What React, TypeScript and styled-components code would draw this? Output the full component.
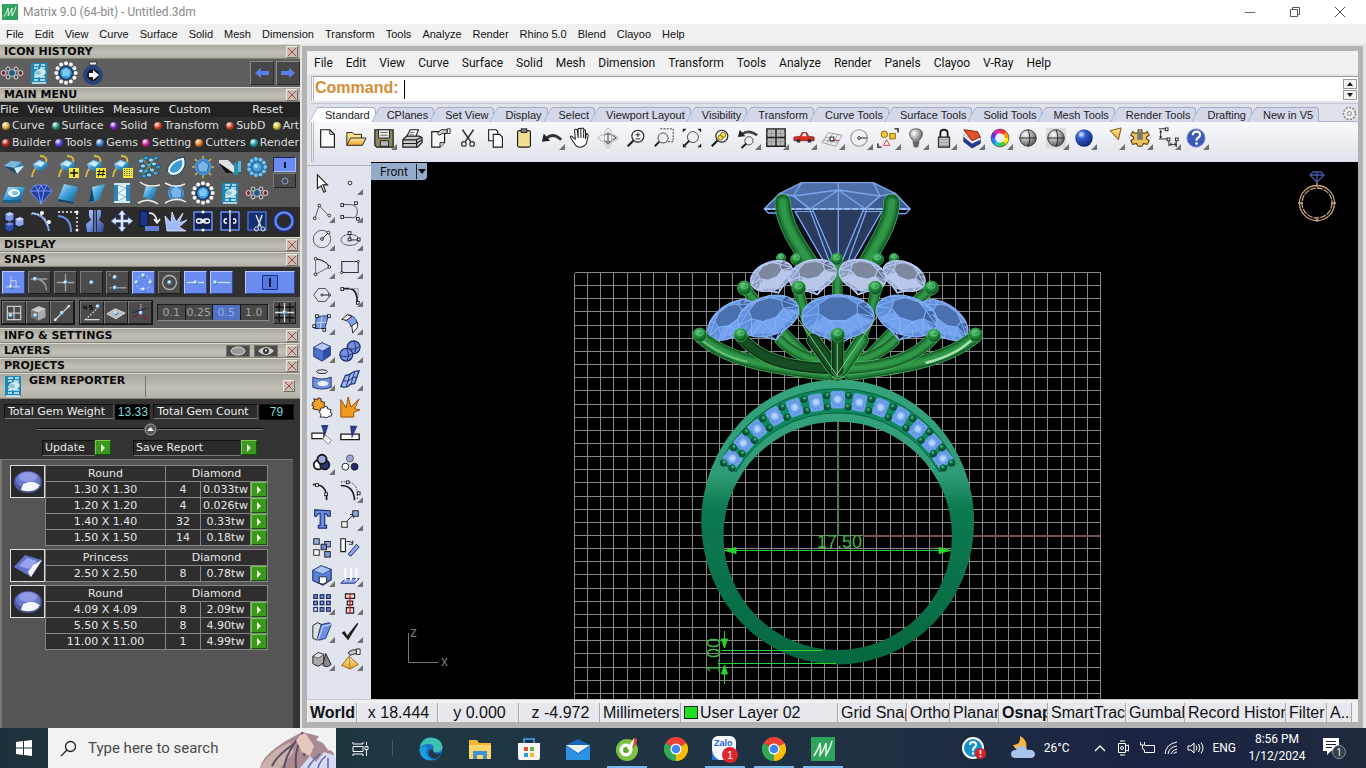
import React from 'react';
import styled, { createGlobalStyle } from 'styled-components';

const VERDANA = `"DejaVu Sans", Verdana, sans-serif`;
const ARIAL = `"Liberation Sans", Arial, sans-serif`;
const SEGOE = `Roboto, "Noto Sans", sans-serif`;

const Global = createGlobalStyle`
  *, *::before, *::after { box-sizing: border-box; }
  html, body { margin: 0; background: #1c2f3a; }
  button { font: inherit; color: inherit; background: none; border: 0; padding: 0; margin: 0; }
  svg { display: block; flex: none; }
`;

/* ---------- shell ---------- */
const Page = styled.div`
  display: flex;
  flex-direction: column;
  min-height: 100vh;
  overflow: hidden;
  font-family: ${ARIAL};
`;
const TitleBar = styled.header`
  display: flex;
  align-items: center;
  gap: 5px;
  height: 24px;
  padding: 0 14px 0 2px;
  background: #fff;
  color: #8a8a8a;
  font: 12px ${SEGOE};
`;
const WindowButtons = styled.div`
  display: flex;
  gap: 33px;
  margin-left: auto;
  padding-right: 6px;
`;
const MenuBar = styled.nav<{ $size: number; $gap: number; $font: string; $height: number; $left: number }>`
  display: flex;
  align-items: center;
  gap: ${(p) => p.$gap}px;
  height: ${(p) => p.$height}px;
  padding-left: ${(p) => p.$left}px;
  background: #f1f1f1;
  color: #111;
  font: ${(p) => p.$size}px ${(p) => p.$font};
  white-space: nowrap;
`;
const Main = styled.main`
  display: flex;
  flex: 1;
  min-height: 0;
  background: #e4e4e4;
`;

/* ---------- sidebar ---------- */
const Sidebar = styled.aside`
  display: flex;
  flex-direction: column;
  flex: none;
  width: 300px;
  background: #333;
  color: #e8e8e8;
  font: 11px ${VERDANA};
`;
const PanelHeader = styled.div<{ $tall?: boolean }>`
  display: flex;
  align-items: ${(p) => (p.$tall ? 'stretch' : 'center')};
  gap: 4px;
  height: ${(p) => (p.$tall ? 26 : 15)}px;
  padding: ${(p) => (p.$tall ? '0 5px 0 1px' : '0 2px 0 4px')};
  border-top: 1px solid #dcd9d0;
  border-bottom: 1px solid #86837b;
  background: linear-gradient(#aaa79e, #c2bfb6 60%, #b3b0a6);
  color: #0a0a0a;
`;
const PanelTitle = styled.h2`
  margin: 0;
  font: bold 11px/13px ${VERDANA};
`;
const HeaderEnd = styled.div`
  display: flex;
  align-items: center;
  gap: 4px;
  margin-left: auto;
`;
const HeaderDivider = styled.i`
  width: 1px;
  margin: 2px 0 1px 16px;
  background: #77746c;
`;
const CloseBox = styled.button`
  display: grid;
  place-items: center;
  width: 12px;
  height: 12px;
  border: 1px solid;
  border-color: #e9e6de #6d6a64 #6d6a64 #e9e6de;
  background: #c8c0b6;
`;
const EyeBox = styled.button`
  display: grid;
  place-items: center;
  width: 24px;
  height: 12px;
  border: 1px solid #77746c;
  background: #4a4a4a;
`;
const HistoryRow = styled.div`
  display: flex;
  align-items: center;
  gap: 3px;
  height: 28px;
  background: #5f5f5f;
`;
const HistoryArrows = styled.div`
  display: flex;
  gap: 2px;
  margin-left: auto;
`;
const ArrowButton = styled.button`
  display: grid;
  place-items: center;
  width: 24px;
  height: 24px;
  border: 1px solid;
  border-color: #8a8a8a #2a2a2a #2a2a2a #8a8a8a;
  background: #474747;
`;
const SideMenu = styled.nav`
  display: flex;
  gap: 9px;
  height: 15px;
  background: #222;
  color: #e4e4e4;
  line-height: 14px;
  & > :last-child { margin: 0 17px 0 auto; }
`;
const Categories = styled.nav`
  display: flex;
  flex-direction: column;
  height: 35px;
  background: #2d2d2d;
`;
const CategoryRow = styled.div`
  display: flex;
  justify-content: space-between;
  height: 17px;
  padding: 0 1px 0 2px;
  overflow: hidden;
  white-space: nowrap;
`;
const Category = styled.button<{ $dot: string }>`
  display: flex;
  align-items: center;
  gap: 2px;
  color: #dedede;
  &::before {
    content: '';
    width: 8px;
    height: 8px;
    border-radius: 50%;
    background: radial-gradient(circle at 35% 30%, #fff, ${(p) => p.$dot} 45%, #111 110%);
  }
`;
const ToolArea = styled.div`
  display: flex;
  height: 55px;
  background: linear-gradient(90deg, #636363, #575757);
`;
const ToolGrid = styled.div`
  display: grid;
  grid-template-columns: repeat(10, 27px);
  grid-auto-rows: 26px;
  padding-top: 2px;
`;
const IconButton = styled.button`
  display: grid;
  place-items: center;
`;
const TogglePair = styled.div`
  display: flex;
  flex-direction: column;
  gap: 1px;
  padding: 5px 0 0 3px;
`;
const Toggle = styled.button<{ $on?: boolean }>`
  display: grid;
  place-items: center;
  width: 23px;
  height: 15px;
  border: 1px solid;
  border-color: ${(p) => (p.$on ? '#16225a #a9c0ff #a9c0ff #16225a' : '#7d7d7d #222 #222 #7d7d7d')};
  background: ${(p) => (p.$on ? '#6a8cf0' : '#4c4c4c')};
`;
const EditRow = styled.div`
  display: grid;
  grid-template-columns: repeat(11, 27px);
  height: 30px;
  padding-bottom: 3px;
  background: #2b2b2b;
`;
const SnapRow = styled.div`
  display: flex;
  align-items: center;
  gap: 3px;
  height: 30px;
  padding: 0 5px 0 2px;
  background: #303030;
`;
const SnapButton = styled.button<{ $on?: boolean }>`
  display: grid;
  place-items: center;
  width: 23px;
  height: 23px;
  border: 1px solid;
  border-color: ${(p) => (p.$on ? '#b6c8ff #2e4690 #2e4690 #b6c8ff' : '#7a7a7a #1d1d1d #1d1d1d #7a7a7a')};
  background: ${(p) => (p.$on ? '#6a8cf0' : '#4b4b4b')};
`;
const MasterSnap = styled(SnapButton)`
  width: 50px;
  margin-left: auto;
`;
const GridRow = styled.div`
  display: flex;
  align-items: center;
  gap: 4px;
  height: 31px;
  padding: 0 4px 0 1px;
  background: #5c5c5c;
`;
const ButtonTrio = styled.div`
  display: flex;
  border: 1px solid #161616;
  & > button { width: 24px; }
`;
const GridSteps = styled.div`
  display: flex;
  flex: 1;
  border: 1px solid;
  border-color: #1c1c1c #8b8b8b #8b8b8b #1c1c1c;
`;
const Step = styled.button<{ $on?: boolean }>`
  flex: 1;
  height: 15px;
  border-right: 1px solid #1a1a1a;
  background: ${(p) => (p.$on ? '#5170c0' : '#484848')};
  color: ${(p) => (p.$on ? '#8faaf0' : '#a5a5a5')};
  line-height: 14px;
`;

/* ---------- gem reporter ---------- */
const Reporter = styled.section`
  display: flex;
  flex: 1;
  flex-direction: column;
  background: #333;
`;
const Totals = styled.dl`
  display: flex;
  gap: 1px;
  margin: 0;
  padding: 5px 4px 0 4px;
`;
const TotalLabel = styled.dt`
  flex: auto;
  height: 15px;
  padding-left: 3px;
  border: 1px solid;
  border-color: #111 #555 #777 #111;
  background: #2b2b2b;
  color: #f0f0f0;
  line-height: 13px;
  white-space: nowrap;
`;
const TotalValue = styled.dd`
  flex: none;
  width: 35px;
  margin: 0 2px 0 0;
  border: 1px solid #111;
  background: #000;
  color: #7fd8de;
  font: 12px/14px ${ARIAL};
  text-align: center;
`;
const Collapse = styled.div`
  display: flex;
  align-items: center;
  height: 18px;
  padding: 0 37px;
  &::before, &::after { content: ''; flex: 1; height: 2px; background: #0c0c0c; border-bottom: 1px solid #777; }
`;
const ReportActions = styled.div`
  display: flex;
  gap: 22px;
  height: 21px;
  padding: 2px 43px 0 42px;
`;
const Action = styled.div<{ $grow?: boolean }>`
  display: flex;
  flex: ${(p) => (p.$grow ? 1 : 'none')};
  width: 69px;
  height: 16px;
`;
const ActionText = styled.span`
  flex: 1;
  padding-left: 2px;
  border: 1px solid;
  border-color: #111 #333 #777 #111;
  background: #2a2a2a;
  line-height: 13px;
  white-space: nowrap;
`;
const Go = styled.button`
  display: grid;
  place-items: center;
  width: 16px;
  height: 15px;
  border: 1px solid;
  border-color: #7cc854 #17520c #17520c #7cc854;
  background: #3c981c;
`;
const GemList = styled.div`
  display: flex;
  flex: 1;
  flex-direction: column;
  gap: 3px;
  margin-right: 7px;
  padding: 5px 0 0 8px;
  border: solid #777;
  border-width: 1px 0 0 2px;
  background: #555;
`;
const GemGroup = styled.div`
  display: flex;
  align-items: flex-start;
`;
const Thumb = styled.div`
  display: grid;
  place-items: center;
  width: 35px;
  height: 33px;
  border: 1px solid #ddd;
  background: #2a2a2a;
`;
const GemTable = styled.table`
  width: 222px;
  border-collapse: collapse;
  table-layout: fixed;
  background: #2e2e2e;
  th, td {
    height: 16px;
    padding: 0;
    border: 1px solid #858585;
    font-weight: normal;
    line-height: 13px;
    text-align: center;
  }
`;

/* ---------- modelling window ---------- */
const Frame = styled.section`
  display: flex;
  flex: 1;
  flex-direction: column;
  min-width: 0;
  margin: 2px 3px 0 2px;
  border: solid #b3b3b3;
  border-width: 5px 5px 6px;
  background: #e1e4ea;
`;
const CommandRow = styled.div`
  display: flex;
  align-items: center;
  height: 25px;
  margin: 2px 0 2px 4px;
  border-left: 3px double #b5bac6;
  border-top: 1px solid #9a9a9a;
  background: #fff;
`;
const CommandLabel = styled.label`
  padding: 0 5px 2px 1px;
  color: #d58c35;
  font: bold 16px/20px ${ARIAL};
`;
const CommandInput = styled.input`
  flex: 1;
  height: 19px;
  padding: 0;
  border: 0;
  border-left: 1px solid #000;
  outline: 0;
  font: 16px ${ARIAL};
`;
const Spinner = styled.div`
  display: flex;
  flex-direction: column;
  gap: 1px;
  padding-right: 1px;
`;
const SpinButton = styled.button`
  display: grid;
  place-items: center;
  width: 14px;
  height: 10px;
  border: 1px solid #999;
  background: #f3f3f3;
`;
const TabStrip = styled.div`
  display: flex;
  align-items: flex-end;
  height: 19px;
  margin-left: 4px;
  padding-left: 7px;
  border-top: 1px solid #c3c8d2;
  background: #dfe2ea;
  box-shadow: inset 0 -1px #a9b4c9;
  font: 11px ${ARIAL};
  & > :last-child { margin: 0 1px 1px auto; }
`;
const Tab = styled.button<{ $on?: boolean }>`
  position: relative;
  height: 15px;
  margin-right: 4px;
  padding: 0 5px 0 7px;
  border-top: 1px solid #a3aec4;
  border-right: 1px solid #a3aec4;
  border-radius: 0 4px 0 0;
  background: ${(p) => (p.$on ? '#fff' : '#d3d8e9')};
  color: #222;
  line-height: 14px;
  white-space: nowrap;
  &::before {
    content: '';
    position: absolute;
    left: -5px;
    top: -1px;
    width: 9px;
    height: 15px;
    border-top: 1px solid #a3aec4;
    border-left: 1px solid #a3aec4;
    border-radius: 3px 0 0 0;
    background: inherit;
    transform: skewX(-28deg);
  }
`;
const TabText = styled.span`
  position: relative;
`;
const ToolBar = styled.div`
  display: flex;
  height: 40px;
  padding-top: 2px;
  margin-left: 4px;
  border-left: 3px double #b5bac6;
  background: linear-gradient(#f8f9fb, #dfe2ea);
`;
const ToolButton = styled.button<{ $menu?: boolean }>`
  position: relative;
  display: grid;
  place-items: center;
  width: 28px;
  height: 28px;
  &::after {
    content: '';
    display: ${(p) => (p.$menu ? 'block' : 'none')};
    position: absolute;
    right: 1px;
    bottom: 2px;
    width: 0;
    height: 0;
    border: 3px solid #707070;
    border-top-color: transparent;
    border-left-color: transparent;
  }
`;
const WorkArea = styled.div`
  display: flex;
  flex: 1;
  min-height: 0;
`;
const Palette = styled.div`
  display: grid;
  grid-template-columns: 28px 28px;
  grid-auto-rows: 28px;
  flex: none;
  align-content: start;
  width: 64px;
  padding: 7px 0 0 1px;
  box-shadow: inset 0 3px #e1e4ea, inset 0 4px #aeb4c0;
  background: #e0e4ec;
`;
const Viewport = styled.div`
  position: relative;
  display: flex;
  flex: 1;
  min-width: 0;
  background: #000;
  & > svg { width: 100%; height: 100%; }
`;
const ViewLabel = styled.button`
  position: absolute;
  left: 0;
  top: 1px;
  display: flex;
  align-items: center;
  height: 17px;
  padding-left: 9px;
  border-radius: 0 0 4px 0;
  background: #94abc9;
  color: #111;
  font: 12px ${SEGOE};
`;
const ViewArrow = styled.span`
  display: grid;
  place-items: center;
  width: 11px;
  height: 15px;
  margin-left: 8px;
  border-left: 1px solid #222;
`;
const StatusBar = styled.footer`
  display: flex;
  gap: 1px;
  height: 23px;
  padding: 3px 6px 0 1px;
  border-top: 1px solid #c8c8c8;
  background: #f0f0f0;
  color: #111;
  font: 16px/19px ${ARIAL};
  white-space: nowrap;
`;
const StatusCell = styled.span<{ $w: number; $bold?: boolean; $center?: boolean; $grow?: boolean }>`
  display: flex;
  align-items: center;
  justify-content: ${(p) => (p.$center ? 'center' : 'flex-start')};
  gap: 2px;
  flex: ${(p) => (p.$grow ? 1 : 'none')};
  width: ${(p) => p.$w}px;
  padding-left: 2px;
  overflow: hidden;
  border-right: 1px solid #a8a8a8;
  background: #e6e8ee;
  font-weight: ${(p) => (p.$bold ? 'bold' : 'normal')};
`;
const LayerSwatch = styled.i`
  width: 14px;
  height: 13px;
  border: 1px solid #222;
  background: #1fe01f;
`;

/* ---------- task bar ---------- */
const TaskBar = styled.footer`
  display: flex;
  align-items: stretch;
  height: 40px;
  background: linear-gradient(90deg, #1c323a, #1f3743 30%, #1f3043 65%, #1b2242 85%, #1f2a3e);
  color: #fff;
  font: 12px ${SEGOE};
`;
const StartButton = styled.button`
  display: grid;
  place-items: center;
  width: 48px;
`;
const SearchBox = styled.label`
  display: flex;
  align-items: center;
  gap: 11px;
  width: 288px;
  padding-left: 12px;
  background: #f2f2f2;
`;
const SearchInput = styled.input`
  flex: 1;
  min-width: 0;
  padding: 0;
  border: 0;
  outline: 0;
  background: transparent;
  font: 15px ${SEGOE};
  &::placeholder { color: #4a4a4a; opacity: 1; }
`;
const TaskButton = styled.button<{ $open?: boolean }>`
  display: grid;
  place-items: center;
  width: 49px;
  padding-top: 2px;
  background: linear-gradient(#76b9ed, #76b9ed) center bottom / 40px 2px no-repeat;
  background-size: ${(p) => (p.$open ? '40px 2px' : '0 0')};
`;
const TaskDivider = styled.i`
  width: 1px;
  margin: 12px 13px 12px 7px;
  background: #4b5a62;
`;
const Tray = styled.div`
  display: flex;
  align-items: center;
  margin-left: auto;
`;
const Weather = styled.button`
  display: flex;
  align-items: center;
  gap: 8px;
  margin: 0 24px 0 24px;
`;
const TrayIcons = styled.div`
  display: flex;
  align-items: center;
  gap: 8px;
`;
const Clock = styled.time`
  width: 82px;
  line-height: 17px;
  text-align: center;
`;
const Notice = styled.button`
  margin: 0 20px 0 4px;
`;

/* ---------- icons ---------- */
const N = { fill: 'none' };
const K = '#1b1b1b';
const B3 = '#1c2a66';

const DefsHolder = styled.svg`
  position: absolute;
`;
const Defs = () => (
  <DefsHolder width="0" height="0" aria-hidden="true">
    <defs>
      <radialGradient id="pearl" cx=".35" cy=".3" r=".8"><stop offset="0" stopColor="#fff" /><stop offset=".4" stopColor="#9fd6f5" /><stop offset="1" stopColor="#174a7c" /></radialGradient>
      <radialGradient id="grey" cx=".35" cy=".3" r=".8"><stop offset="0" stopColor="#fff" /><stop offset=".5" stopColor="#a5a5a5" /><stop offset="1" stopColor="#444" /></radialGradient>
      <radialGradient id="navy" cx=".35" cy=".3" r=".8"><stop offset="0" stopColor="#eaf2ff" /><stop offset=".3" stopColor="#2f5fd0" /><stop offset="1" stopColor="#0a1c66" /></radialGradient>
      <linearGradient id="aqua" x1="0" y1="0" x2="1" y2="1"><stop offset="0" stopColor="#c5ebff" /><stop offset=".5" stopColor="#3c9ed6" /><stop offset="1" stopColor="#155a86" /></linearGradient>
      <linearGradient id="peri" x1="0" y1="0" x2="1" y2="1"><stop offset="0" stopColor="#c6d4ff" /><stop offset=".5" stopColor="#6b8be0" /><stop offset="1" stopColor="#2e478f" /></linearGradient>
      <linearGradient id="gold" x1="0" y1="0" x2="0" y2="1"><stop offset="0" stopColor="#ffe9a0" /><stop offset="1" stopColor="#e8a22c" /></linearGradient>
      <linearGradient id="band" x1="0" y1="0" x2="0" y2="1"><stop offset="0" stopColor="#35a37c" /><stop offset=".33" stopColor="#2f9c75" /><stop offset=".45" stopColor="#0d7a52" /><stop offset="1" stopColor="#06683f" /></linearGradient>
      <radialGradient id="bead" cx=".4" cy=".3" r=".7"><stop offset="0" stopColor="#5cc474" /><stop offset=".5" stopColor="#1f8a3c" /><stop offset="1" stopColor="#0a4a1c" /></radialGradient>
      <radialGradient id="bead2" cx=".4" cy=".3" r=".7"><stop offset="0" stopColor="#5cc79c" /><stop offset=".4" stopColor="#0f6e4a" /><stop offset="1" stopColor="#053c26" /></radialGradient>
    </defs>
  </DefsHolder>
);

const sq = (x: number, y: number, s = 4, fill = '#fff') => <rect x={x} y={y} width={s} height={s} fill={fill} stroke={K} />;
const dot = (x: number, y: number, r = 1.5) => <circle cx={x} cy={y} r={r} fill="#fff" stroke={K} />;
const pearl = (x: number, y: number, r = 2.6) => <circle cx={x} cy={y} r={r} fill="url(#pearl)" />;
const halo = (n: number, r: number, s: number, fill: string) =>
  Array.from({ length: n }, (_, i) => (
    <circle key={i} cx={12 + r * Math.cos((i * 2 * Math.PI) / n)} cy={12 + r * Math.sin((i * 2 * Math.PI) / n)} r={s} fill={fill} />
  ));
const swirl = (
  <>
    <path d="M11 1q8 0 6 7-2 4-5 4M9 12q-5 2-6 10" stroke="#d9c23a" strokeWidth="1.800" {...N} />
    <path d="M4 9l6-4 8 2 1 4-6 5-7-2z" fill="url(#aqua)" />
    <path d="M6 9l5-3 5 2-4 4z" fill="#c9ecff" />
  </>
);
const magnifier = <><circle cx="14" cy="10" r="6.5" fill="#fff" fillOpacity=".5" stroke={K} strokeWidth="1.2" /><path d="M9 15l-6 6" stroke={K} strokeWidth="2.4" /></>;
const hands = 'M6 13l-3-3q-2-1-1 2l4 6q2 4 6 4t7-4l2-9q0-2-2-2l-1 6M18 13V4q-1-2-2 0v8V2q-1-2-3 0v10-10q-2-1-3 0l0 10-1-9q-2-1-3 0l1 11';

const icons: Record<string, React.ReactNode> = {
  trio: <><circle cx="3.500" cy="12" r="2.500" fill="#7a2d40" stroke="#e8dfe2" /><circle cx="8" cy="8" r="2" fill="#444" stroke="#ddd" /><circle cx="8" cy="16" r="2" fill="#444" stroke="#ddd" /><circle cx="12" cy="12" r="3.500" fill="#2b5876" stroke="#9ec3d8" /><circle cx="16" cy="8" r="2" fill="#444" stroke="#ddd" /><circle cx="16" cy="16" r="2" fill="#444" stroke="#ddd" /><circle cx="20.500" cy="12" r="2.500" fill="#7a2d40" stroke="#e8dfe2" /></>,
  report: <><path d="M4 2h16v20H4z" fill="#1d87b5" /><path d="M7 4h5M14 4h4M7 7h4M13 7h5M7 16h4M13 16h5M7 19h4M13 19h5M5 22h14" stroke="#d9f1fb" strokeWidth="1.300" /><ellipse cx="13" cy="12" rx="6" ry="4" fill="#cfe9f2" transform="rotate(-20 13 12)" /><ellipse cx="11" cy="12" rx="3" ry="2" fill="#8ec3d6" /></>,
  halo: <><circle cx="12" cy="12" r="6.500" fill="#3f9fe0" stroke="#123a66" strokeWidth="1.500" /><path d="M8 10l4-3 4 3-1 5h-6z" fill="#7cc8f5" />{halo(12, 9.7, 2, '#f2f4f6')}</>,
  cluster: <><circle cx="12" cy="12" r="10" fill="#2b6ea3" />{halo(11, 8.2, 1.9, '#7cc3e8')}<circle cx="12" cy="12" r="4.500" fill="#4aa3dd" /><circle cx="11" cy="11" r="2" fill="#a8dcf8" /></>,
  ringArrow: <><path d="M8 1h8l-1 3h-6z" fill="#eee" stroke="#223" strokeWidth=".8" /><circle cx="12" cy="14" r="8" stroke="#27447a" strokeWidth="4" fill="#181818" /><path d="M8 12h4V9l6 5-6 5v-3H8z" fill="#fff" /></>,
  gem1: <><path d="M2 11l7-5 10 1 3 4-7 8-4-2z" fill="#3d86b4" /><path d="M2 11l7-5 10 1-7 6z" fill="#7fb9d8" /><path d="M12 13l10-2-7 8z" fill="#d3ebf8" /><path d="M2 11l10 2 3 6-4-2z" fill="#1d4a66" /></>,
  gem2: swirl,
  gem3: <>{swirl}<rect x="13" y="13" width="10" height="10" fill="#f2e63d" /><path d="M18 14v8M14 18h8" stroke="#111" strokeWidth="1.600" /></>,
  gem4: <>{swirl}<rect x="13" y="13" width="10" height="10" fill="#f2e63d" /><path d="M16.500 14.500l-1 7M20.500 14.500l-1 7M14 16.500h8M14 19.500h8" stroke="#111" /></>,
  gem5: <>{swirl}<rect x="13" y="13" width="10" height="10" fill="#f2e63d" /><path d="M14 14.500h8M14 16.500h8M14 18.500h8M14 20.500h8" stroke="#444" strokeDasharray="1 1.500" /></>,
  pave: <>{[[4, 6], [9, 3], [14, 5], [19, 3], [6, 11], [12, 10], [17, 9], [21, 12], [4, 16], [9, 16], [15, 15], [19, 18], [12, 20], [7, 21]].map(([x, y], i) => <ellipse key={i} cx={x} cy={y} rx="2.600" ry="2" fill={i % 2 ? '#3f9bd0' : '#9ad4f2'} stroke="#145075" strokeWidth=".8" />)}<path d="M5 3l14 17M18 3L6 19" stroke="#aab458" strokeWidth=".8" /></>,
  drop: <><path d="M20 2q3 8-2 14-5 6-12 4-4-3-2-8Q8 4 20 2z" fill="#e8f4fb" stroke="#0f405e" /><path d="M18 5q1 7-3 10-4 4-8 2-2-2 0-5 4-6 11-7z" fill="#3e9ad0" /></>,
  prong: <><path d="M12 1v22M1 12h22M4 4l16 16M20 4L4 20" stroke="#d6b441" strokeWidth="1.600" /><circle cx="12" cy="12" r="8.500" fill="#4a8fcf" /><path d="M6 10l6-5 6 5-2 7H8z" fill="#79b6ea" stroke="#2d6aa8" /></>,
  cutter: <><path d="M1 5h9l6 6v7L1 8z" fill="#e0e4e6" /><path d="M1 8l14 10H8z" fill="#111" /><path d="M16 8h4v12h-4z" fill="#2a8cae" /><path d="M20 6h3v11h-3z" fill="#57bbd6" /></>,
  bezel: <><path d="M1 19L6 6h17l-4 13z" fill="url(#aqua)" /><path d="M1 19h18v3H1z" fill="#1a6188" /><ellipse cx="12" cy="12" rx="6" ry="4" fill="#e9f6ff" /><ellipse cx="13" cy="12" rx="3" ry="2" fill="#88bdd6" /></>,
  diamond: <><path d="M6 4h12l5 6-11 13L1 10z" fill="#2340a0" stroke="#6488f0" /><path d="M1 10h22M6 4l3 6 3-6 3 6 3-6M9 10l3 13 3-13" stroke="#7b9cf8" {...N} /></>,
  slab: <><path d="M8 3l14 3-5 15L2 18z" fill="url(#aqua)" /><path d="M2 18l15 3v2L2 20z" fill="#0f4666" /></>,
  wedge: <><path d="M9 6l13-3-6 16-8 3z" fill="url(#aqua)" /><path d="M9 6l-3 15 5-1z" fill="#0f4666" /></>,
  pillar: <><path d="M4 3h16v18H4z" fill="#2b85b6" /><path d="M8 3h8v18H8z" fill="#e9f3f7" /><path d="M8 4l8 3-8 5 8 4-8 4" stroke="#7fb6d1" {...N} /><path d="M4 3h16M4 21h16" stroke="#cfeaf7" strokeWidth="2" /></>,
  bridge: <><path d="M9 5l11 2-4 12-10-3z" fill="url(#aqua)" /><path d="M3 1q7 6 20 3M1 22q10-6 20 1" stroke="#eee" strokeWidth="1.500" {...N} /></>,
  orb: <><circle cx="12" cy="12" r="8" fill="#4f94d4" /><path d="M6 9l6-4 6 4-1 8H8z" fill="#7ab4ea" stroke="#2d6aa8" /><path d="M1 2q10 6 20 1M1 22q12-7 21-1" stroke="#eee" strokeWidth="1.500" {...N} /></>,
  cubes: <><path d="M3 5l5-2 4 2v6l-5 2-4-2z" fill="#7e96dc" stroke="#18204a" /><path d="M3 5l5-2 4 2-5 2z" fill="#bccaf6" /><path d="M13 10l5-2 4 2v6l-5 2-4-2z" fill="#8ea4e4" stroke="#18204a" /><path d="M13 10l5-2 4 2-5 2z" fill="#ccd7fa" /><path d="M3 15l5-2 4 2v6l-5 2-4-2z" fill="#2f4ca8" stroke="#18204a" /><path d="M3 15l5-2 4 2-5 2z" fill="#6f8ae0" /></>,
  arc: <><path d="M3 4q14 2 17 18" stroke="#7f9ff0" strokeWidth="2" {...N} /><path d="M2 5q14-2 17 12" stroke="#eee" strokeDasharray="2 1" {...N} /><circle cx="13" cy="4" r="2" fill="#fff" /><circle cx="20" cy="13" r="2" fill="#fff" /></>,
  fillet: <><path d="M2 3h19v18" stroke="#eee" strokeDasharray="2 2" strokeWidth="1.500" {...N} /><path d="M2 7q13 1 13 16" stroke="#6f91f0" strokeWidth="2" {...N} /><circle cx="21" cy="3" r="1.500" fill="#fff" /><circle cx="21" cy="21" r="1.500" fill="#fff" /></>,
  mirror: <><path d="M10 1H6v6l2 4-5 4 1 8h6zM14 1h4v6l-2 4 5 4-1 8h-6z" fill="url(#peri)" /><path d="M12 1v22" stroke="#8fb3ff" /></>,
  move: <path d="M12 1l4 5h-2.500v4.500H18V8l5 4-5 4v-2.500h-4.500V18H16l-4 5-4-5h2.500v-4.500H6V16l-5-4 5-4v2.500h4.500V6H8z" fill="#e1e9ff" stroke="#3c5bb0" strokeWidth=".7" />,
  rotate: <><path d="M3 2h8v15H3z" fill="#1b3583" stroke="#0a1437" /><path d="M8 17h14v5H8z" fill="#5e80d8" /><path d="M12 4q7 0 8 9M17 10l3 4 3-4" stroke="#fff" strokeWidth="1.500" {...N} /></>,
  burst: <path d="M3 22L1 7l6 7 1-11 4 10 7-9-4 10 8-3-8 7 7 4H3z" fill="#9fb9fb" stroke="#dfe8ff" strokeWidth=".8" />,
  link: <><path d="M3 3h18v18H3z" fill="#11204f" stroke="#6e8ff0" strokeWidth="1.500" /><rect x="5.500" y="10" width="6" height="4" rx="2" stroke="#fff" strokeWidth="1.300" {...N} /><rect x="12.500" y="10" width="6" height="4" rx="2" stroke="#fff" strokeWidth="1.300" {...N} /><path d="M9 12h6" stroke="#fff" strokeWidth="1.300" /><circle cx="12" cy="3" r="1.500" fill="#fff" /><circle cx="12" cy="21" r="1.500" fill="#fff" /></>,
  unlink: <><path d="M3 3h18v18H3z" fill="#11204f" stroke="#6e8ff0" strokeWidth="1.500" /><path d="M9 10H7q-2 2 0 4h2M15 10h2q2 2 0 4h-2M12 1v22" stroke="#fff" strokeWidth="1.300" {...N} /></>,
  trimPlan: <><path d="M3 3h18v18H3z" fill="#15306f" stroke="#4a6ad0" strokeWidth="1.500" /><path d="M11 6l5 12M17 6l-4 12" stroke="#ddd" strokeWidth="1.500" /><circle cx="11.500" cy="20" r="2" stroke="#ddd" {...N} /><circle cx="18" cy="20" r="2" stroke="#ddd" {...N} /></>,
  torus: <><circle cx="12" cy="12" r="8.500" stroke="#1b2f86" strokeWidth="5" {...N} /><circle cx="12" cy="12" r="8.500" stroke="#6785e2" strokeWidth="2.500" {...N} /></>,
  // snaps
  sEnd: <><path d="M3 17h16M9 17V5M9 10h6v7" stroke="#d5def8" {...N} />{pearl(9, 17)}</>,
  sNear: <><path d="M2 8h19M7 8q12 0 13 13" stroke="#999" strokeWidth="1.500" {...N} />{pearl(7, 8)}</>,
  sInt: <><path d="M12 2v20M2 12h20" stroke="#a5a5a5" strokeWidth="1.500" />{pearl(12, 12)}</>,
  sPoint: pearl(12, 12),
  sPerp: <><path d="M9 18h13M3 2v2M3 18h2" stroke="#999" strokeWidth="1.500" />{pearl(9, 6)}{pearl(9, 18)}</>,
  sQuad: <><circle cx="12" cy="12" r="8" stroke="#cfdcff" strokeDasharray="3 2" {...N} />{pearl(12, 4)}{pearl(20, 12)}{pearl(12, 20)}{pearl(4, 12)}</>,
  sCen: <><circle cx="12" cy="12" r="8" stroke="#b5b5b5" strokeWidth="1.500" {...N} />{pearl(12, 12)}</>,
  sMid: <><path d="M2 12h20" stroke="#d5def8" strokeWidth="1.500" />{pearl(12, 12)}</>,
  sLine: <><path d="M4 12h18" stroke="#d5def8" strokeWidth="1.500" />{pearl(5, 12)}</>,
  gWin: <><path d="M4 4h16v16H4zM12 4v16M4 12h16" stroke="#ccc" strokeWidth="1.500" {...N} />{pearl(8, 15)}</>,
  gCube: <><path d="M4 8l9-4 8 3v10l-8 4-9-4z" fill="#a9a9a9" /><path d="M4 8l8 3v10l-8-4z" fill="#787878" /><path d="M4 8l9-4 8 3-9 4z" fill="#ccc" />{pearl(9, 15)}</>,
  gLine: <><path d="M3 21L21 3" stroke="#ddd" strokeWidth="1.500" />{pearl(12, 12)}<circle cx="4" cy="20" r="1.500" fill="#fff" /><circle cx="20" cy="4" r="1.500" fill="#fff" /></>,
  g45: <><path d="M4 20L20 5" stroke="#eee" strokeDasharray="2 2" strokeWidth="1.300" /><path d="M3 20h18" stroke="#ddd" strokeWidth="1.500" /><path d="M5 3v5M2 3v3h4M12 3H9v2h3v3H9" stroke="#0a0a0a" strokeWidth="1.300" {...N} />{pearl(19, 4)}</>,
  gPlane: <><path d="M1 13l10-6 12 5-11 7z" fill="#bcbcbc" stroke="#e5e5e5" />{pearl(12, 12)}</>,
  gAxis: <><path d="M13 1v11" stroke="#ddd" strokeDasharray="2 1" /><path d="M2 12l19-6" stroke="#252a50" strokeWidth="1.500" /><path d="M13 12l8 9M3 17l10-5" stroke="#8a1f2c" strokeWidth="1.500" />{pearl(13, 12)}</>,
  gGrid: <><path d="M1 6h22M1 18h22M6 1v22M18 1v22" stroke="#111" strokeWidth="1.500" /><path d="M1 12h22M12 1v22" stroke="#ddd" strokeWidth="1.500" />{pearl(12, 12)}</>,
  // standard tool bar
  new: <><path d="M4 3h10l5 5v14H4z" fill="#fafafa" stroke={K} strokeWidth="1.300" /><path d="M14 3v5h5" stroke={K} {...N} /></>,
  open: <><path d="M2 20V6h6l2 2h8v4" fill="#fbe08a" stroke={K} /><path d="M2 20l4-8h17l-4 8z" fill="url(#gold)" stroke={K} /></>,
  save: <><path d="M2 3h20v19H4l-2-2z" fill="#8e8a66" stroke={K} strokeWidth="1.300" /><path d="M6 3h12v9H6z" fill="#e8e8e8" stroke={K} /><path d="M8 15h9v6H8z" fill="#bbb" stroke={K} /><path d="M8 6h8M8 9h8" stroke="#666" /></>,
  print: <><path d="M6 11l4-8h9l-3 8" fill="#fff" stroke={K} strokeWidth="1.200" /><path d="M10 6h5M9 8h5" stroke="#777" /><path d="M2 14l4-4h14l3 2v5l-5 5H2z" fill="#c9c9c9" stroke={K} strokeWidth="1.300" /><path d="M2 14h15v8M17 14l6-3M2 18h15l6-4" stroke={K} strokeWidth="1.300" {...N} /></>,
  props: <><path d="M3 5h14v12l-5 5H3z" fill="#f5f5f5" stroke={K} strokeWidth="1.300" /><path d="M12 22v-5h5" fill="#ddd" stroke={K} /><path d="M9 7l4-4h7v4h-5l-4 2z" fill="#ccc" stroke={K} /><path d="M20 2h3v5h-3z" fill="#fff" stroke={K} /></>,
  cut: <><path d="M6 3l9 13M18 3L9 16" stroke="#333" strokeWidth="1.700" /><circle cx="7.500" cy="18.500" r="2.500" stroke="#333" strokeWidth="1.300" {...N} /><circle cx="16.500" cy="18.500" r="2.500" stroke="#333" strokeWidth="1.300" {...N} /></>,
  copy: <><path d="M4 3h8l2 2v10H4z" fill="#fff" stroke={K} strokeWidth="1.200" /><path d="M9 8h7l3 3v11H9z" fill="#fff" stroke={K} strokeWidth="1.200" /></>,
  paste: <><rect x="5" y="4" width="14" height="18" rx="2" fill="#f0e092" stroke={K} strokeWidth="1.300" /><rect x="9" y="2" width="6" height="4" fill="#888" stroke={K} /></>,
  undo: <><path d="M5 13q8-8 17 1" stroke="#333" strokeWidth="3" {...N} /><path d="M1 16l2-9 7 8z" fill="#222" /></>,
  hand: <path d={hands} fill="#fff" stroke={K} strokeWidth="1.100" />,
  orbit: <><path d="M12 1q4 2 4 11t-4 11q-4-2-4-11t4-11zM1 12q2-4 11-4t11 4q-2 4-11 4T1 12z" stroke="#aaa" {...N} /><path d="M12 7v10M9 15l3 4 3-4M9 9l3-3 3 3M17 14l4-2-4-3" stroke="#333" {...N} /></>,
  zoomIn: <>{magnifier}<path d="M14 6v5M11.500 8.500h5M11.500 13h5" stroke={K} /></>,
  zoomWin: <><path d="M8 2h14v14H9" stroke={K} strokeDasharray="2 1.500" {...N} /><circle cx="11" cy="12" r="5.500" fill="#eee" stroke="#444" /><path d="M7 16l-5 5" stroke={K} strokeWidth="2" /></>,
  zoomExt: <><circle cx="13" cy="11" r="6" fill="#eee" stroke="#444" /><path d="M9 15l-5 5" stroke={K} strokeWidth="2" /><path d="M2 2h4L2 6zM22 2h-4l4 4zM2 22h4l-4-4zM22 22h-4l4-4z" fill={K} /></>,
  zoomSel: <>{magnifier}<circle cx="12.500" cy="11.500" r="2.700" fill="#f4e04a" stroke="#776a00" /><circle cx="15.500" cy="8.500" r="2.700" fill="#f4e04a" stroke="#776a00" /></>,
  undoView: <><path d="M5 8q8-6 17 1" stroke="#444" strokeWidth="3" {...N} /><path d="M1 11l2-8 6 7z" fill="#222" /><circle cx="13" cy="15" r="4.500" fill="#eee" stroke="#444" /><path d="M10 18l-5 5" stroke={K} strokeWidth="2" /></>,
  views: <><path d="M2 2h20v19H2z" fill="#b9b9b9" stroke={K} strokeWidth="1.500" /><path d="M2 7h20M2 16h20M7 2v19M17 2v19" stroke="#888" strokeWidth=".7" /><path d="M12 2v19M2 11.500h20" stroke={K} strokeWidth="1.500" /></>,
  car: <><path d="M1 15v-4l7-1 2-4h5l2 4 6 1v4z" fill="#dd2a22" stroke="#7a0d0a" strokeWidth=".7" /><path d="M10 10l1-3h3l1 3z" fill="#fff" /><circle cx="6" cy="15" r="2.300" fill="#333" /><circle cx="18" cy="15" r="2.300" fill="#333" /></>,
  mesh: <><path d="M1 17L8 6l15 3-7 12zM5 11l14 4M11 18l8-10M6 18l7-11M3 14l15 3" stroke="#9b9b9b" {...N} /><path d="M12 14l8 1" stroke="#c33" />{sq(10, 11, 4)}</>,
  circleCad: <><circle cx="11" cy="12" r="9" stroke="#999" strokeWidth="1.300" {...N} /><path d="M11 12h9" stroke={K} />{dot(11, 12)}</>,
  shapes: <><circle cx="8" cy="8" r="3.500" fill="#f5c932" stroke="#806000" /><path d="M14 7h6v6h-6z" fill="#f5c932" stroke="#806000" /><path d="M7 20l3.500-6 3.500 6z" fill="#fff" stroke="#c33" /><path d="M19 2h4v4M1 18v4h4" stroke={K} strokeWidth="1.500" {...N} /></>,
  bulb: <><path d="M12 2q7 0 7 6 0 3-4 7v3H9v-3Q5 11 5 8q0-6 7-6z" fill="url(#grey)" stroke="#555" /><path d="M9 18h6v3l-3 2-3-2z" fill="#666" /></>,
  lock: <><path d="M8 11V7q0-4 4-4t4 4v4" stroke={K} strokeWidth="2" {...N} /><path d="M6 11h12v11H6z" fill="#ccc" stroke={K} strokeWidth="1.300" /><path d="M6 14h12M6 17h12M6 20h12" stroke="#888" /></>,
  layers: <><path d="M3 11l9 7 9-5v5l-9 5-9-7z" fill="#23389c" stroke={K} strokeWidth=".7" /><path d="M3 8l9 7 9-5v4l-9 4-9-7z" fill="#fff" stroke="#888" strokeWidth=".7" /><path d="M3 3l15 2 3 6-9 4z" fill="#e5512a" stroke="#761c08" /></>,
  wheel: <>{['#f33', '#f90', '#fe0', '#5c2', '#2cb', '#28f', '#63d', '#e2a'].map((c, i) => <path key={c} d="M12 4.500A7.500 7.500 0 0 1 17.600 7" stroke={c} strokeWidth="4.500" transform={`rotate(${i * 45} 12 12)`} {...N} />)}<circle cx="12" cy="12" r="9.700" stroke="#333" strokeWidth=".7" {...N} /></>,
  ball: <><circle cx="12" cy="12" r="9" fill="url(#grey)" stroke="#333" /><path d="M3 12h18M12 3q4 9 0 18" stroke="#222" {...N} /></>,
  ballSel: <><path d="M1 1h22v22H1z" fill="#d0d0d0" opacity=".7" /><circle cx="12" cy="12" r="9" fill="url(#grey)" stroke="#333" /><path d="M3 12h18M12 3q4 9 0 18" stroke="#222" {...N} /></>,
  ballBlue: <circle cx="12" cy="12" r="9.500" fill="url(#navy)" />,
  cone: <path d="M10 4l12-3-3 13z" fill="url(#gold)" stroke="#7a4a00" />,
  gear: <><path d="M10 3h4v3l3 1 3-2 2 4-3 2v2l3 2-2 4-4-1-2 3h-4l-2-3-4 1-2-4 3-2v-2L2 9l2-4 3 2 3-1z" fill="#ecc15c" stroke="#5c3d08" strokeWidth="1.200" /><rect x="9" y="5" width="6" height="9" fill="#777" /></>,
  dims: <><path d="M2 2h9M4 4v8M2 13h11M13 13v8M21 14v8M14 19h7M3 6l1-2 1 2M3 10l1 2 1-2M16 17l-2 2 2 2M19 17l2 2-2 2" stroke={K} {...N} />{sq(9, 1, 3)}{sq(11, 12, 3)}{sq(20, 12, 3)}</>,
  help: <><circle cx="12" cy="12" r="10" fill="#3b57b8" stroke="#8fa5e6" /><path d="M8.500 9q0-4 4-4t4 3.500q0 2-2.500 3.500-1.500 1-1.500 3" stroke="#fff" strokeWidth="2.300" {...N} /><circle cx="12.500" cy="18" r="1.500" fill="#fff" /></>,
  // palette
  pointer: <path d="M7 3v15l4-3 3 7 2-1-3-7h5z" fill="#fff" stroke={K} strokeWidth="1.200" />,
  point: dot(12, 12, 2),
  poly: <><path d="M4 21L9 6l11 12" stroke="#555" {...N} />{dot(4, 20)}{dot(9, 6)}{dot(20, 17)}</>,
  curve: <><path d="M4 5h8q8 0 8 8t-8 6H4" stroke="#444" {...N} />{sq(2, 4, 3)}{sq(2, 17, 3)}{sq(17, 2, 3)}{sq(19, 19, 3)}</>,
  circle: <><circle cx="12" cy="12" r="9.500" stroke="#555" {...N} /><path d="M12 12l7-7" stroke={K} />{dot(12, 12)}{dot(19, 5)}</>,
  ellipse: <><ellipse cx="12" cy="13" rx="10" ry="6" stroke="#555" {...N} /><path d="M12 13h9M12 13V6" stroke={K} />{sq(10, 11, 3)}{sq(10, 4, 3)}{sq(20, 11, 3)}</>,
  arcPie: <><path d="M5 3q12 2 15 9L5 20z" stroke="#666" {...N} /><path d="M5 3q12 2 15 9" stroke={K} {...N} />{dot(5, 3)}{dot(20, 12)}{dot(5, 20)}</>,
  rect: <><path d="M3 6h18v12H3z" stroke="#333" strokeWidth="1.200" {...N} />{dot(21, 6, 1.2)}{dot(3, 18, 1.2)}</>,
  hexa: <><path d="M8 5h8l5 7-5 7H8l-5-7z" stroke="#444" {...N} /><path d="M12 12h8" stroke={K} />{dot(12, 12, 1.2)}{dot(20, 12, 1.2)}</>,
  blend: <><path d="M3 5h8q9 0 9 16" stroke={K} strokeWidth="1.800" {...N} /><path d="M11 5h10v10" stroke="#999" {...N} />{sq(2, 4, 3)}{sq(19, 19, 3)}</>,
  patch: <><path d="M6 5l13-1-4 14-11 0z" fill="#7393e0" stroke={B3} /><path d="M5 12l12-1M12 5l-2 13" stroke="#d2dcfa" />{sq(5, 3, 3)}{sq(18, 3, 3)}{sq(2, 14, 3)}{sq(13, 18, 3)}</>,
  sweep: <><path d="M9 3q8 0 11 9l-7 4q-1-6-8-8z" fill="#86a2ea" stroke={B3} /><path d="M9 3L3 8l5 1 6-4zM14 15l6-4v6l-5 6z" fill="#fff" stroke={K} /></>,
  box: <><path d="M3 8l9-5 9 4v10l-9 6-9-5z" fill="#4e71cf" stroke={B3} /><path d="M3 8l9-5 9 4-8 5z" fill="#b8c9f8" stroke={B3} strokeWidth=".6" /><path d="M13 12l8-5v10l-8 6z" fill="#2f4da5" /></>,
  spheres: <><circle cx="16" cy="8" r="7" fill="#7391e0" stroke={B3} strokeWidth="1.300" /><circle cx="8" cy="16" r="7" fill="#7391e0" stroke={B3} strokeWidth="1.300" /><path d="M10 9q6 3 12-2M2 17q6 3 12-2M16 1q4 7 1 13M8 9q4 7 1 13" stroke={B3} {...N} /></>,
  tubeIc: <><ellipse cx="12" cy="4" rx="6" ry="2" stroke={K} {...N} /><path d="M2 10q10 4 20 0v11q-10 4-20 0z" fill="#6f8ddd" stroke={B3} /><ellipse cx="13" cy="17" rx="6" ry="3" fill="#e8eefc" /></>,
  sheet: <><path d="M7 8q4 0 6-2 3-3 9-3l-5 14q-5 0-7 3-3 2-8 0z" fill="#9db3ee" stroke={B3} strokeWidth="1.300" /><path d="M5 14q5 1 7-1 3-4 7-3M12 7L8 20M17 4l-4 14" stroke={B3} {...N} /></>,
  puzzle: <><path d="M3 3l4 1 1-2 3 1v3l4 1-1 4 2 1-1 3-3-1-1 2-9-2 1-3-2-1 1-3 2-1z" fill="#f1a12b" stroke={K} /><path d="M11 13l3 0 1-2 3 1v2l4 1-1 3 2 1-1 3-3 0-1 2-4-1-4 0 1-3-2-2 1-2z" fill="#fff" stroke={K} /></>,
  explode: <path d="M2 23V4l6 9 2-12 3 11 9-9-5 11 6 1-7 3v5z" fill="#f39a1c" stroke="#93480a" />,
  trim: <><path d="M1 10h13v6H1z" fill="#fff" stroke={K} strokeWidth="1.300" /><path d="M11 1h8l-4 13z" fill="#2c3c86" /><path d="M16 12l6 6-3 4-6-6z" fill="#fff" stroke="#777" /></>,
  split: <><path d="M2 11h20v6H2z" fill="#fff" stroke={K} strokeWidth="1.500" /><path d="M12 2h8l-6 14z" fill="#2c3c86" /></>,
  group: <><circle cx="8" cy="14" r="5" fill="#fff" stroke={K} strokeWidth="2" /><circle cx="15" cy="14" r="5" fill="#2b3575" stroke={K} strokeWidth="2" /><circle cx="12" cy="8" r="5" fill="#9fa8dd" stroke={K} strokeWidth="2" /></>,
  ungroup: <><circle cx="12" cy="7" r="3.800" fill="#9fa8dd" stroke="#555" /><circle cx="7" cy="16" r="3.800" fill="#fff" stroke={K} /><circle cx="17" cy="16" r="3.800" fill="#23286a" stroke={K} /></>,
  join: <><path d="M2 5q16-1 15 17" stroke={K} strokeWidth="1.800" {...N} />{sq(5, 4, 3)}{sq(15, 14, 3)}</>,
  offset: <><path d="M2 6q14 0 15 16" stroke={K} strokeWidth="1.800" {...N} /><path d="M2 2h8q10 2 10 13v7" stroke={K} strokeDasharray="1.500 1.500" {...N} />{sq(8, 1, 3)}{sq(20, 13, 3)}</>,
  text: <path d="M4 2l17 1v6h-3q0-3-3-3v13h2v3H8v-3h2V6Q7 6 6 9H4z" fill="#6a8ae4" stroke={B3} strokeWidth="1.200" />,
  scale: <><path d="M8 15l8-8M12 7h4v4" stroke={K} {...N} />{sq(3, 15, 6)}{sq(15, 3, 6, '#8ea5e6')}</>,
  blocks: <>{sq(3, 3, 6, '#9aaee6')}{sq(15, 6, 6, '#9aaee6')}{sq(11, 9, 6, '#6d88d2')}{sq(3, 15, 6)}{sq(15, 17, 6, '#7f96dc')}</>,
  orient: <><path d="M2 3h5v14H2z" fill="#fff" stroke={K} strokeWidth="1.200" /><path d="M8 6q5-1 7 2M15 5v4h-4" stroke={K} {...N} /><path d="M10 20l9-11 3 3-9 10z" fill="#8ea5e6" stroke={B3} /></>,
  solid: <><path d="M2 7l9-5 11 4v11l-9 6-11-5z" fill="#5b80da" stroke={B3} strokeWidth="1.200" /><path d="M2 7l9-5 11 4-9 5z" fill="#a9c4f8" stroke={B3} strokeWidth=".6" /><path d="M9 14h8v6l-4 2-4-1z" fill="#fff" stroke={K} /></>,
  project: <><path d="M2 21l5-5h15l-5 5z" fill="#8ea5e6" stroke={B3} /><path d="M7 4v14M13 4v14M19 4v14" stroke="#fff" strokeWidth="2" /></>,
  array: <>{[3, 10, 17].map((x) => [3, 10, 17].map((y) => <rect key={`${x}-${y}`} x={x} y={y} width="4" height="4" fill={x === 3 && y === 17 ? '#fff' : '#7f94d4'} stroke={B3} strokeWidth="1.300" />))}</>,
  align: <><path d="M7 2h10v5H7zM9 10h6v4H9zM8 17h8v6H8z" fill="#f6d4d4" stroke={K} strokeWidth="1.200" /><path d="M12 1v22" stroke="#d22" strokeWidth="1.500" /></>,
  bend: <><path d="M2 6l5-3 5 2v13l-5 4-5-2z" fill="#ddd" stroke={K} /><path d="M11 5l9-2 2 2-6 15-7 2-2-2z" fill="#6d90e2" stroke={B3} /><path d="M13 7l9-2M13 7l-5 14" stroke="#dfe7fb" /></>,
  check: <path d="M3 14l3-2 3 5L20 3l1 1-11 18z" fill={K} />,
  primitives: <><path d="M2 9l6-4 6 2v9l-6 4-6-3z" fill="#aaa" stroke={K} /><path d="M2 9l6-4 6 2-6 4z" fill="#e2e2e2" stroke={K} strokeWidth=".6" /><path d="M16 6l6 12q-4 4-9 1z" fill="#888" stroke={K} /></>,
  pyramid: <><path d="M3 19l8-10 10 9-9 5z" fill="url(#gold)" stroke="#9a5d08" /><path d="M11 9l1 14" stroke="#9a5d08" strokeWidth=".7" /><path d="M10 5l5-3h4v4l-4 1-3 1z" fill="#ccc" stroke={K} /><path d="M19 1h4v6h-4z" fill="#fff" stroke={K} /></>,
};

const Icon = ({ name, size = 24 }: { name: string; size?: number }) => (
  <svg width={size} height={size} viewBox="0 0 24 24" aria-hidden="true">{icons[name]}</svg>
);

/* ---------- model drawing ---------- */
const gridPath = (() => {
  const parts: string[] = [];
  for (let i = 0; i <= 40; i += 1) {
    const x = Math.round(574 + i * 13.15) + 0.5;
    const y = Math.round(272 + i * 13.15) + 0.5;
    parts.push(`M${x} 272.500V798`, `M574.500 ${y}H1100.500`);
  }
  return parts.join('');
})();

type GemProps = { x: number; y: number; rx: number; ry: number; tilt: number; pale?: boolean };
const BrilliantTop = ({ x, y, rx, ry, tilt, pale }: GemProps) => {
  const line = pale ? '#b9cbf4' : '#86b0f4';
  const pt = (a: number, k: number) => `${(rx * k * Math.cos(a)).toFixed(1)} ${(ry * k * Math.sin(a) - (1 - k) * ry * 0.85).toFixed(1)}`;
  const steps = Array.from({ length: 8 }, (_, i) => (i * Math.PI) / 4 + 0.39);
  return (
    <g transform={`translate(${x} ${y}) rotate(${tilt})`}>
      <path d={`M${-rx * 0.8} ${ry * 0.5}L0 ${ry * 1.3}L${rx * 0.8} ${ry * 0.5}`} fill="#0b1424" stroke={line} strokeWidth="3" />
      <path d={`M${-rx * 0.45} ${ry * 0.8}L0 ${ry * 1.3}L${rx * 0.45} ${ry * 0.8}M${-rx * 0.2} ${ry * 0.9}L0 ${ry * 1.3}L${rx * 0.2} ${ry * 0.9}`} stroke={line} strokeWidth="3" {...N} />
      <ellipse rx={rx} ry={ry} fill={pale ? '#8f9fc4' : '#5f8edb'} stroke={line} strokeWidth="4" />
      <path d={`M${pt(0.2, 1)}L${pt(0.5, 0.55)}L${pt(2.4, 0.55)}L${pt(2.6, 1)}L${pt(1.5, 1)}z`} fill={pale ? '#c3d0ee' : '#79a8f2'} opacity=".8" />
      <path d={`M${pt(0.1, 1)}L${pt(0.4, 0.58)}L${pt(-0.4, 0.58)}L${pt(-0.7, 1)}z`} fill={pale ? '#5c6679' : '#3a5c96'} opacity=".8" />
      <path d={steps.map((a) => `M${pt(a, 0.58)}L${pt(a + 0.39, 1)}M${pt(a, 0.58)}L${pt(a - 0.39, 1)}M${pt(a, 0.8)}L${pt(a, 1)}`).join('')} stroke={line} strokeWidth="3" {...N} />
      <path d={`${steps.map((a, i) => `${i ? 'L' : 'M'}${pt(a, 0.58)}`).join('')}z`} fill={pale ? '#7d879e' : '#4a70b0'} stroke={line} strokeWidth="3" />
    </g>
  );
};

const Prong = ({ d, w, dark }: { d: string; w: number; dark?: boolean }) => (
  <g fill="none" strokeLinecap="round">
    <path d={d} stroke="#4fae61" strokeWidth={w + 3} />
    <path d={d} stroke={dark ? '#0f3517' : '#17602a'} strokeWidth={w - 1} />
    <path d={d} stroke={dark ? '#164d23' : '#23803a'} strokeWidth={w * 0.7} />
    {!dark && <path d={d} stroke="#309748" strokeWidth={w * 0.4} />}
  </g>
);
const Tip = ({ x, y, r = 18 }: { x: number; y: number; r?: number }) => (
  <g>
    <circle cx={x} cy={y} r={r} fill="url(#bead)" stroke="#4fb564" strokeWidth="2" />
    <ellipse cx={x} cy={y - r * 0.3} rx={r * 0.55} ry={r * 0.35} stroke="#7fd88d" strokeWidth="2" {...N} />
  </g>
);

const crownHalf = (
  <>
    <Prong d="M200 360Q250 430 380 560L470 610" w={30} />
    <Prong d="M300 510Q350 560 430 575" w={30} />
  </>
);

const Crown = () => (
  <g transform="translate(680 170) scale(.33333)">
    <g fill="#2b3b5e" stroke="#7ba6ee" strokeWidth="4" strokeLinejoin="round">
      <path d="M265 124L475 310L682 124z" fill="#0c1220" stroke="none" />
      <path d="M345 124L440 290L475 305L510 290L605 124z" fill="#2a3a5c" />
      <path d="M390 120L452 285M398 120L475 300L550 120M560 120L500 285M475 40V300" />
      <path d="M253 117L300 70L365 38H580L645 70L690 117z" fill="#4d6ea6" />
      <path d="M253 117L300 70L340 78L390 117zM690 117L645 70L600 78L556 117z" fill="#3f5c92" />
      <path d="M365 38L340 78L390 117L475 60L556 117L600 78L580 38M340 78L475 60L600 78M475 38V117" fill="none" />
      <path d="M253 117h437" stroke="#a9c8fb" strokeDasharray="18 6" />
      <path d="M253 117l12 12h60M690 117l-12 14h-60" fill="none" />
    </g>
    <Prong d="M308 96C310 160 350 220 395 285" w={46} />
    <Prong d="M635 96C634 160 590 220 555 285" w={46} />
    <Prong d="M472 270V620" w={28} />
    {crownHalf}
    <g transform="matrix(-1 0 0 1 945 0)">{crownHalf}</g>
    <Tip x={303} y={264} r={14} />
    <Tip x={350} y={268} />
    <Tip x={470} y={268} />
    <Tip x={593} y={268} />
    <Tip x={642} y={264} r={14} />
    <BrilliantTop x={275} y={318} rx={66} ry={42} tilt={-22} pale />
    <BrilliantTop x={672} y={318} rx={66} ry={42} tilt={22} pale />
    <BrilliantTop x={398} y={316} rx={72} ry={46} tilt={-14} pale />
    <BrilliantTop x={548} y={316} rx={72} ry={46} tilt={14} pale />
    <Prong d="M355 352Q360 400 400 500L470 610" w={30} />
    <Prong d="M588 352Q584 400 545 500L475 610" w={30} />
    <Prong d="M754 356L700 400" w={30} />
    <Tip x={193} y={354} r={21} />
    <Tip x={356} y={354} r={21} />
    <Tip x={586} y={354} r={21} />
    <Tip x={754} y={354} r={21} />
    <BrilliantTop x={155} y={450} rx={82} ry={46} tilt={-36} />
    <BrilliantTop x={792} y={450} rx={82} ry={46} tilt={36} />
    <BrilliantTop x={265} y={438} rx={94} ry={58} tilt={-18} />
    <BrilliantTop x={680} y={438} rx={94} ry={58} tilt={18} />
    <Prong d="M62 500C140 570 260 590 440 612" w={38} />
    <Prong d="M885 500C800 570 680 590 510 612" w={38} />
    <Prong d="M182 500C240 570 320 590 450 596" w={34} dark />
    <Prong d="M762 500C700 570 620 590 500 596" w={34} />
    <path d="M880 505Q830 555 740 578" stroke="#a9e2b3" strokeWidth="8" strokeLinecap="round" {...N} />
    <path d="M70 515Q130 560 200 575" stroke="#6cc07b" strokeWidth="6" strokeLinecap="round" {...N} />
    <Prong d="M400 510L465 600" w={40} dark />
    <Prong d="M545 510L485 600" w={40} />
    <BrilliantTop x={474} y={440} rx={108} ry={66} tilt={0} />
    <Prong d="M473 500V600" w={36} dark />
    <Tip x={59} y={495} r={21} />
    <Tip x={182} y={495} r={20} />
    <Tip x={473} y={495} r={21} />
    <Tip x={762} y={497} r={20} />
    <Tip x={887} y={495} r={21} />
    <path d="M350 440L470 615L590 440M472 520V620" stroke="#7fcb8c" strokeWidth="3" {...N} />
  </g>
);

const paveStones = [[443, 88], [508, 97], [572, 112], [632, 138], [684, 177], [726, 219], [759, 265]];
const paveBeads = [[476, 77], [544, 88], [610, 111], [668, 146], [718, 186], [756, 233], [785, 279], [474, 111], [536, 122], [595, 142], [648, 174], [693, 211], [730, 251], [760, 294]];
const paveHalf = (
  <>
    {paveStones.map(([x, y]) => (
      <g key={x} transform={`translate(${x} ${y}) rotate(${(x - 443) * 0.16})`}>
        <rect x="-21" y="-25" width="42" height="52" rx="8" fill="#6ba0e8" />
        <circle r="19" stroke="#4a7acb" strokeWidth="3" strokeDasharray="3 8" {...N} />
        <circle r="11" fill="#9cc4f8" />
        <circle r="6" fill="#b9d6fc" />
      </g>
    ))}
    {paveBeads.map(([x, y]) => <circle key={x} cx={x} cy={y} r="10" fill="url(#bead2)" stroke="#04502f" strokeWidth="2" />)}
  </>
);

const Band = () => (
  <g>
    <path fillRule="evenodd" d="M701.300 522a136.400 142.600 0 0 1 272.800 0a136.400 142.600 0 0 1 -272.800 0zM723.500 535.800a114.200 114.200 0 0 0 228.400 0a114.200 114.200 0 0 0 -228.400 0z" fill="url(#band)" />
    <path d="M720.700 462A130 130 0 0 1 954.700 462L939.400 472A117 117 0 0 0 736 472z" fill="#0f8a60" stroke="#06603c" />
    <g transform="translate(690 370) scale(.33333)">
      {paveHalf}
      <g transform="matrix(-1 0 0 1 886 0)">{paveHalf}</g>
    </g>
  </g>
);

const Model = () => (
  <svg viewBox="371 162 987 537" preserveAspectRatio="xMidYMin slice" role="img" aria-label="Front view of the ring">
    <path d={gridPath} stroke="#868686" shapeRendering="crispEdges" />
    <path d="M863 536h237" stroke="#7c5252" strokeWidth="2" />
    <path d="M838 420v116" stroke="#4a7a4c" strokeWidth="2" />
    <Band />
    <Crown />
    <g stroke="#27d32c" fill="#27d32c">
      <path d="M724 550.500h227M722 650.500h100M718 663.500h118M724.500 631v16M724.500 667v17" />
      <path d="M725 550.500l11-3v6zM950 550.500l-11-3v6zM724.500 648l-3-9h6zM724.500 665l-3 9h6z" />
    </g>
    <g fill="#3fb544" fontFamily="Liberation Sans, Arial, sans-serif" fontSize="18">
      <text x="817" y="548">17.50</text>
      <text transform="translate(720 673) rotate(-90)">1.00</text>
    </g>
    <path d="M408.500 633v29.500h30" stroke="#777" {...N} />
    <g fill="#777" fontFamily="Liberation Sans, Arial, sans-serif" fontSize="14">
      <text x="410" y="637">z</text>
      <text x="441" y="666">x</text>
    </g>
    <g fill="none" stroke="#c9a27c" strokeWidth="1.300">
      <circle cx="1317" cy="203" r="17.500" />
      <circle cx="1317" cy="203" r="15" strokeDasharray="6 1" />
      <path d="M1317 181v6M1317 219v3M1298 203h5M1331 203h5" />
      <path d="M1313 172h8l3 3-7 7-7-7zM1310 175h14M1317 172v10" stroke="#4358a8" />
    </g>
  </svg>
);

/* ---------- data ---------- */
const topMenu = ['File', 'Edit', 'View', 'Curve', 'Surface', 'Solid', 'Mesh', 'Dimension', 'Transform', 'Tools', 'Analyze', 'Render', 'Rhino 5.0', 'Blend', 'Clayoo', 'Help'];
const rhinoMenu = ['File', 'Edit', 'View', 'Curve', 'Surface', 'Solid', 'Mesh', 'Dimension', 'Transform', 'Tools', 'Analyze', 'Render', 'Panels', 'Clayoo', 'V-Ray', 'Help'];
const tabs = ['Standard', 'CPlanes', 'Set View', 'Display', 'Select', 'Viewport Layout', 'Visibility', 'Transform', 'Curve Tools', 'Surface Tools', 'Solid Tools', 'Mesh Tools', 'Render Tools', 'Drafting', 'New in V5'];
const categories: [string, string][][] = [
  [['Curve', '#d8b43a'], ['Surface', '#2d9a7a'], ['Solid', '#7a22c8'], ['Transform', '#d8402c'], ['SubD', '#d8402c'], ['Art', '#d4c83a']],
  [['Builder', '#c42424'], ['Tools', '#5548d8'], ['Gems', '#3f7fd0'], ['Setting', '#d020a0'], ['Cutters', '#e87820'], ['Render', '#20a8a0']],
];
const sideTools = ['gem1', 'gem2', 'gem3', 'gem4', 'gem5', 'pave', 'drop', 'prong', 'cutter', 'cluster', 'bezel', 'diamond', 'slab', 'wedge', 'pillar', 'bridge', 'orb', 'halo', 'report', 'trio'];
const editTools = ['cubes', 'arc', 'fillet', 'mirror', 'move', 'rotate', 'burst', 'link', 'unlink', 'trimPlan', 'torus'];
const snaps: [string, boolean][] = [['sEnd', true], ['sNear', false], ['sInt', false], ['sPoint', false], ['sPerp', false], ['sQuad', true], ['sCen', false], ['sMid', true], ['sLine', true]];
const barTools = 'new open save* print props cut copy paste undo* hand orbit zoomIn zoomWin zoomExt zoomSel undoView* views* car* mesh* circleCad* shapes* bulb* lock* layers* wheel* ball ballSel* ballBlue* cone* gear* dims* help*'.split(' ');
const paletteTools = 'pointer point* poly* curve* circle* ellipse* arcPie* rect* hexa* blend* patch* sweep* box* spheres* tubeIc* sheet* puzzle explode trim split group* ungroup join offset* text scale* blocks orient solid* project* array* align* bend* check* primitives* pyramid*'.split(' ');
const gems = [
  { cut: 'Round', rows: [['1.30 X 1.30', '4', '0.033tw'], ['1.20 X 1.20', '4', '0.026tw'], ['1.40 X 1.40', '32', '0.33tw'], ['1.50 X 1.50', '14', '0.18tw']] },
  { cut: 'Princess', rows: [['2.50 X 2.50', '8', '0.78tw']] },
  { cut: 'Round', rows: [['4.09 X 4.09', '8', '2.09tw'], ['5.50 X 5.50', '8', '4.90tw'], ['11.00 X 11.00', '1', '4.99tw']] },
];

const Close = () => (
  <CloseBox aria-label="Close panel">
    <svg width="8" height="8" viewBox="0 0 8 8"><path d="M0 0l8 8M8 0L0 8" stroke="#a8433a" /></svg>
  </CloseBox>
);
const Header = ({ title, eyes }: { title: string; eyes?: boolean }) => (
  <PanelHeader>
    <PanelTitle>{title}</PanelTitle>
    <HeaderEnd>
      {eyes && (
        <>
          <EyeBox aria-label="Hide layers"><svg width="18" height="10" viewBox="0 0 18 10"><ellipse cx="9" cy="5" rx="7" ry="4" fill="#999" stroke="#ddd" /></svg></EyeBox>
          <EyeBox aria-label="Show layers"><svg width="18" height="10" viewBox="0 0 18 10"><path d="M1 5q8-8 16 0-8 8-16 0z" fill="#ccc" /><circle cx="9" cy="5" r="3" fill="#333" /><circle cx="9" cy="4.500" r="1" fill="#fff" /></svg></EyeBox>
          <span />
        </>
      )}
      <Close />
    </HeaderEnd>
  </PanelHeader>
);
const GoButton = ({ label }: { label: string }) => (
  <Go aria-label={label}><svg width="6" height="8" viewBox="0 0 6 8"><path d="M1 0l4 4-4 4z" fill="#e6ffd8" /></svg></Go>
);
const GemThumb = ({ cut }: { cut: string }) => (
  <Thumb>
    <svg width="30" height="26" viewBox="0 0 30 26">
      {cut === 'Round'
        ? <><ellipse cx="15" cy="13" rx="14" ry="11" fill="#4f5a9e" /><ellipse cx="15" cy="11" rx="12" ry="8" fill="#6976cc" /><ellipse cx="15" cy="8" rx="9" ry="5" fill="#8e9ae4" /><path d="M8 21l2-6 6-2 5 0 6 3q-5 9-19 5z" fill="#f2f6ff" /></>
        : <><path d="M1 14L12 2l17 5-11 17z" fill="#6470c4" /><path d="M6 13l8-8 10 3-8 8z" fill="#99a5f2" /><path d="M29 7L18 24l-3-5 5-7z" fill="#f2f6ff" /></>}
    </svg>
  </Thumb>
);

const ChromeLogo = () => (
  <svg width="24" height="24" viewBox="0 0 24 24">
    <path d="M12 12L1.600 6a12 12 0 0 1 20.800 0z" fill="#ea4335" />
    <path d="M12 12L22.400 6a12 12 0 0 1-10.400 18z" fill="#fbbc05" />
    <path d="M12 12v12A12 12 0 0 1 1.600 6z" fill="#34a853" />
    <circle cx="12" cy="12" r="5.500" fill="#fff" /><circle cx="12" cy="12" r="4.300" fill="#4285f4" />
  </svg>
);
const MatrixLogo = ({ size }: { size: number }) => (
  <svg width={size} height={size} viewBox="0 0 24 24"><path d="M0 0h24v24H0z" fill="#2fa35c" /><path d="M3 19q4-6 6-13 1 6 0 12 4-5 6-12 0 8 0 12 4-6 6-14" stroke="#e2f7e8" strokeWidth="1.500" {...N} /></svg>
);

export default function App() {
  return (
    <Page>
      <Global />
      <Defs />
      <TitleBar>
        <MatrixLogo size={16} />
        <span>Matrix 9.0 (64-bit) - Untitled.3dm</span>
        <WindowButtons>
          <button aria-label="Minimize"><svg width="12" height="12" viewBox="0 0 12 12"><path d="M1 6.500h10" stroke="#666" /></svg></button>
          <button aria-label="Restore"><svg width="12" height="12" viewBox="0 0 12 12"><path d="M1.500 3.500h7v7h-7zM3.500 3.500v-2h7v7h-2" stroke="#555" {...N} /></svg></button>
          <button aria-label="Close"><svg width="12" height="12" viewBox="0 0 12 12"><path d="M1 1l10 10M11 1L1 11" stroke="#555" /></svg></button>
        </WindowButtons>
      </TitleBar>
      <MenuBar $size={11} $gap={11} $font={ARIAL} $height={20} $left={6}>
        {topMenu.map((m) => <button key={m}>{m}</button>)}
      </MenuBar>

      <Main>
        <Sidebar>
          <Header title="ICON HISTORY" />
          <HistoryRow>
            {['trio', 'report', 'halo', 'ringArrow'].map((n) => <IconButton key={n} aria-label={n}><Icon name={n} /></IconButton>)}
            <HistoryArrows>
              <ArrowButton aria-label="Back"><svg width="14" height="10" viewBox="0 0 14 10"><path d="M0 5l6-5v3h8v4H6v3z" fill="#5b80ee" /></svg></ArrowButton>
              <ArrowButton aria-label="Forward"><svg width="14" height="10" viewBox="0 0 14 10"><path d="M14 5L8 0v3H0v4h8v3z" fill="#5b80ee" /></svg></ArrowButton>
            </HistoryArrows>
          </HistoryRow>
          <Header title="MAIN MENU" />
          <SideMenu>
            {['File', 'View', 'Utilities', 'Measure', 'Custom', 'Reset'].map((m) => <button key={m}>{m}</button>)}
          </SideMenu>
          <Categories>
            {categories.map((row, i) => (
              <CategoryRow key={i}>{row.map(([t, c]) => <Category key={t} $dot={c}>{t}</Category>)}</CategoryRow>
            ))}
          </Categories>
          <ToolArea>
            <ToolGrid>{sideTools.map((n) => <IconButton key={n} aria-label={n}><Icon name={n} /></IconButton>)}</ToolGrid>
            <TogglePair>
              <Toggle $on aria-label="On"><svg width="10" height="8" viewBox="0 0 10 8"><path d="M4 1h2v6H4z" fill="#0b1440" /></svg></Toggle>
              <Toggle aria-label="Off"><svg width="10" height="8" viewBox="0 0 10 8"><circle cx="5" cy="4" r="3" stroke="#8aa4d8" {...N} /></svg></Toggle>
            </TogglePair>
          </ToolArea>
          <EditRow>{editTools.map((n) => <IconButton key={n} aria-label={n}><Icon name={n} /></IconButton>)}</EditRow>
          <Header title="DISPLAY" />
          <Header title="SNAPS" />
          <SnapRow>
            {snaps.map(([n, on]) => <SnapButton key={n} $on={on} aria-label={n}><Icon name={n} size={21} /></SnapButton>)}
            <MasterSnap $on aria-label="Snaps on"><svg width="16" height="15" viewBox="0 0 16 15"><path d="M.5 .5h15v14H.500z" fill="#5577e0" stroke="#1d2f7c" /><path d="M7 3h2v9H7z" fill="#0b1440" /></svg></MasterSnap>
          </SnapRow>
          <GridRow>
            <ButtonTrio>{['gWin', 'gCube', 'gLine'].map((n) => <SnapButton key={n} aria-label={n}><Icon name={n} size={20} /></SnapButton>)}</ButtonTrio>
            <ButtonTrio>{['g45', 'gPlane', 'gAxis'].map((n) => <SnapButton key={n} aria-label={n}><Icon name={n} size={20} /></SnapButton>)}</ButtonTrio>
            <GridSteps>{['0.1', '0.25', '0.5', '1.0'].map((s) => <Step key={s} $on={s === '0.5'}>{s}</Step>)}</GridSteps>
            <SnapButton aria-label="Grid"><Icon name="gGrid" size={21} /></SnapButton>
          </GridRow>
          <Header title="INFO & SETTINGS" />
          <Header title="LAYERS" eyes />
          <Header title="PROJECTS" />
          <PanelHeader $tall>
            <Icon name="report" />
            <PanelTitle>GEM REPORTER</PanelTitle>
            <HeaderDivider />
            <HeaderEnd><Close /></HeaderEnd>
          </PanelHeader>
          <Reporter>
            <Totals>
              <TotalLabel>Total Gem Weight</TotalLabel><TotalValue>13.33</TotalValue>
              <TotalLabel>Total Gem Count</TotalLabel><TotalValue>79</TotalValue>
            </Totals>
            <Collapse>
              <button aria-label="Collapse"><svg width="13" height="13" viewBox="0 0 13 13"><circle cx="6.500" cy="6.500" r="5.500" fill="#555" stroke="#aaa" /><path d="M3 8l3.500-4L10 8z" fill="#fff" /></svg></button>
            </Collapse>
            <ReportActions>
              <Action><ActionText>Update</ActionText><GoButton label="Update" /></Action>
              <Action $grow><ActionText>Save Report</ActionText><GoButton label="Save report" /></Action>
            </ReportActions>
            <GemList>
              {gems.map((g) => (
                <GemGroup key={g.rows[0][0]}>
                  <GemThumb cut={g.cut} />
                  <GemTable>
                    <colgroup><col width="120" /><col width="35" /><col width="50" /><col width="17" /></colgroup>
                    <thead><tr><th>{g.cut}</th><th colSpan={3}>Diamond</th></tr></thead>
                    <tbody>
                      {g.rows.map(([s, n, w]) => (
                        <tr key={s}><td>{s}</td><td>{n}</td><td>{w}</td><td><GoButton label={`Show ${s}`} /></td></tr>
                      ))}
                    </tbody>
                  </GemTable>
                </GemGroup>
              ))}
            </GemList>
          </Reporter>
        </Sidebar>

        <Frame>
          <MenuBar $size={12} $gap={13} $font={SEGOE} $height={23} $left={7}>
            {rhinoMenu.map((m) => <button key={m}>{m}</button>)}
          </MenuBar>
          <CommandRow>
            <CommandLabel htmlFor="command">Command:</CommandLabel>
            <CommandInput id="command" />
            <Spinner>
              <SpinButton aria-label="Previous"><svg width="6" height="4" viewBox="0 0 6 4"><path d="M0 4l3-4 3 4z" fill="#111" /></svg></SpinButton>
              <SpinButton aria-label="Next"><svg width="6" height="4" viewBox="0 0 6 4"><path d="M0 0l3 4 3-4z" fill="#111" /></svg></SpinButton>
            </Spinner>
          </CommandRow>
          <TabStrip>
            {tabs.map((t, i) => <Tab key={t} $on={i === 0}><TabText>{t}</TabText></Tab>)}
            <button aria-label="Tab options"><svg width="15" height="15" viewBox="0 0 15 15"><circle cx="7.500" cy="7.500" r="6" stroke="#888" strokeWidth="1.600" strokeDasharray="2 1.400" fill="#eee" /><circle cx="7.500" cy="7.500" r="2" stroke="#888" {...N} /></svg></button>
          </TabStrip>
          <ToolBar>
            {barTools.map((t) => <ToolButton key={t} $menu={t.endsWith('*')} aria-label={t.replace('*', '')}><Icon name={t.replace('*', '')} size={22} /></ToolButton>)}
          </ToolBar>
          <WorkArea>
            <Palette>
              {paletteTools.map((t) => <ToolButton key={t} $menu={t.endsWith('*')} aria-label={t.replace('*', '')}><Icon name={t.replace('*', '')} size={22} /></ToolButton>)}
            </Palette>
            <Viewport>
              <Model />
              <ViewLabel>Front<ViewArrow><svg width="8" height="5" viewBox="0 0 8 5"><path d="M0 0h8L4 5z" fill="#111" /></svg></ViewArrow></ViewLabel>
            </Viewport>
          </WorkArea>
          <StatusBar>
            <StatusCell $w={49} $bold>World</StatusCell>
            <StatusCell $w={80} $center>x 18.444</StatusCell>
            <StatusCell $w={80} $center>y 0.000</StatusCell>
            <StatusCell $w={80} $center>z -4.972</StatusCell>
            <StatusCell $w={80}>Millimeters</StatusCell>
            <StatusCell $w={156} $grow><LayerSwatch />User Layer 02</StatusCell>
            <StatusCell $w={68}>Grid Snap</StatusCell>
            <StatusCell $w={42}>Ortho</StatusCell>
            <StatusCell $w={48}>Planar</StatusCell>
            <StatusCell $w={48} $bold>Osnap</StatusCell>
            <StatusCell $w={77}>SmartTrack</StatusCell>
            <StatusCell $w={58}>Gumball</StatusCell>
            <StatusCell $w={100}>Record History</StatusCell>
            <StatusCell $w={40}>Filter</StatusCell>
            <StatusCell $w={24}>A...</StatusCell>
          </StatusBar>
        </Frame>
      </Main>

      <TaskBar>
        <StartButton aria-label="Start"><svg width="16" height="16" viewBox="0 0 16 16"><path d="M0 2l7-1v6.500H0zM8 1l8-1v7.500H8zM0 8.500h7V15l-7-1zM8 8.500h8V16l-8-1z" fill="#fff" /></svg></StartButton>
        <SearchBox>
          <svg width="17" height="17" viewBox="0 0 17 17"><circle cx="10.500" cy="6.500" r="5" stroke="#222" strokeWidth="1.300" {...N} /><path d="M7 10l-6 6" stroke="#222" strokeWidth="1.300" /></svg>
          <SearchInput placeholder="Type here to search" aria-label="Type here to search" />
          <svg width="76" height="40" viewBox="0 0 76 40" aria-hidden="true">
            <path d="M0 40Q2 28 24 14L42 4l16 4 10 14 8 2v16z" fill="#a98a90" />
            <path d="M0 40q8-16 30-26l4 10-14 16z" fill="#c9b0aa" />
            <path d="M12 38q6-12 22-22M24 40q2-14 14-30M36 40q-2-20 8-34M44 28q2-12-2-24" stroke="#5d4a62" strokeWidth="2" {...N} />
            <path d="M36 12q6-8 10-6l8 12-4 10-8-4z" fill="#e3c9bc" />
            <path d="M40 40l10-12 6 6 8-10 12 4v12z" fill="#d6daf2" />
            <path d="M48 40q4-8 12-14M58 40q2-8 8-12M68 40v-10" stroke="#5b62a4" strokeWidth="1.500" {...N} />
            <path d="M56 12q14 4 20 18V8H60z" fill="#f2f2f2" />
          </svg>
        </SearchBox>
        <TaskButton aria-label="Task view"><svg width="17" height="16" viewBox="0 0 17 16"><path d="M1 1v2h10V1M1 15v-2h10v2M1 5.500h10v5H1zM14.500 1v3M14.500 9v6M13 5.500h3v3h-3z" stroke="#fff" {...N} /></svg></TaskButton>
        <TaskDivider />
        <TaskButton aria-label="Edge"><svg width="24" height="24" viewBox="0 0 24 24"><circle cx="12" cy="12" r="11.500" fill="#1576c8" /><path d="M1 11Q2 1 12 .500q11 1 11.500 9.500 0 5-6 5-4 0-3-3 1-5-5-5-6 0-8.500 4z" fill="#3fc0b0" /><path d="M8 10q-4 8 5 13-12 1-12.500-11Q3 8 8 10z" fill="#1b9de0" /><path d="M14 12q-1 4 4 5 3 0 5-2-4 8-10 6-5-3-3-8z" fill="#1f3743" /></svg></TaskButton>
        <TaskButton aria-label="File Explorer"><svg width="24" height="22" viewBox="0 0 24 22"><path d="M1 2h8l2 3h12v16H1z" fill="#f2b632" /><path d="M1 7h22v14H1z" fill="#fbd667" /><path d="M5 21v-8h14v8h-4v-4H9v4z" fill="#3f8fd6" /></svg></TaskButton>
        <TaskButton aria-label="Store"><svg width="24" height="24" viewBox="0 0 24 24"><path d="M7 6V2h10v4" stroke="#3fa9ef" strokeWidth="1.600" {...N} /><path d="M1 6h22v15q0 2-2 2H3q-2 0-2-2z" fill="#f4f6f8" /><path d="M7 10h4v4H7z" fill="#e8502c" /><path d="M13 10h4v4h-4z" fill="#6db33f" /><path d="M7 16h4v4H7z" fill="#2a9be8" /><path d="M13 16h4v4h-4z" fill="#f6b91c" /></svg></TaskButton>
        <TaskButton aria-label="Mail"><svg width="24" height="22" viewBox="0 0 24 22"><path d="M0 7l12-6 12 6v15H0z" fill="#1167b5" /><path d="M0 7h24L12 15z" fill="#e9f4fd" /><path d="M0 8l12 8 12-8v14H0z" fill="#2b93e6" /></svg></TaskButton>
        <TaskButton $open aria-label="Coc Coc"><svg width="24" height="24" viewBox="0 0 24 24"><circle cx="12" cy="13" r="11" fill="#7cc243" /><circle cx="11" cy="13" r="6.500" fill="#fff" /><circle cx="11" cy="13" r="3" fill="#5aa82c" /><path d="M12 12L19 1l2 2-6 10z" fill="#fff" /><path d="M19 1l3 1-1 6-3 3z" fill="#e34c33" /></svg></TaskButton>
        <TaskButton aria-label="Chrome"><ChromeLogo /></TaskButton>
        <TaskButton $open aria-label="Zalo"><svg width="28" height="28" viewBox="0 0 28 28"><rect x="1" y="1" width="24" height="24" rx="6" fill="#f4f8ff" /><path d="M8 25q-6-3-7-10v10z" fill="#2a6fe0" /><text x="3" y="11" fontFamily="Liberation Sans, sans-serif" fontWeight="bold" fontSize="9" fill="#1b62d8">Zalo</text><circle cx="19" cy="20" r="8" fill="#e0242c" /><text x="19" y="24" textAnchor="middle" fontFamily="Liberation Sans, sans-serif" fontSize="11" fill="#fff">1</text></svg></TaskButton>
        <TaskButton $open aria-label="Chrome window"><ChromeLogo /></TaskButton>
        <TaskButton $open aria-label="Matrix"><MatrixLogo size={24} /></TaskButton>

        <Tray>
          <button aria-label="Help"><svg width="24" height="24" viewBox="0 0 24 24"><circle cx="11" cy="12" r="10" fill="#1490c8" stroke="#fff" strokeWidth="2" /><path d="M8 9q0-3 3-3t3 3q0 1-3 4v2" stroke="#fff" strokeWidth="2" {...N} /><circle cx="11" cy="17.500" r="1.200" fill="#fff" /><circle cx="18.500" cy="17.500" r="5.500" fill="#d8232a" /><path d="M18.500 14v4M18.500 19.500v1.500" stroke="#fff" strokeWidth="1.600" /></svg></button>
          <Weather>
            <svg width="26" height="26" viewBox="0 0 26 26"><path d="M10 1q8 4 6 13H6Q4 12 3 10q8 0 7-9z" fill="#f5b83d" /><path d="M6 23q-5 0-5-4t5-4q2-5 7-4 4 1 4 4 7-1 8 4 0 4-5 4z" fill="#a9c4ea" /></svg>
            26°C
          </Weather>
          <TrayIcons>
            <svg width="14" height="16" viewBox="0 0 14 16"><path d="M2 11l5-5 5 5" stroke="#fff" strokeWidth="1.300" {...N} /></svg>
            <svg width="16" height="16" viewBox="0 0 16 16"><path d="M3.500 3.500h7v9h-7zM5 1h5M5 15h5M10.500 6l3-1v6l-3-1" stroke="#fff" {...N} /><circle cx="7" cy="8" r="1.500" stroke="#fff" {...N} /></svg>
            <svg width="16" height="16" viewBox="0 0 16 16"><path d="M6 5.500h9.500v7H5.500V10M1.500 2v3h4V2M3.500 5v3q0 2 2 2" stroke="#fff" {...N} /></svg>
            <svg width="16" height="16" viewBox="0 0 16 16"><path d="M2 14Q3 4 14 2M5 14q1-7 9-8M8 14q1-4 6-5M11 14q0-2 3-2" stroke="#fff" {...N} /></svg>
            <svg width="17" height="16" viewBox="0 0 17 16"><path d="M1 6h3l3-3v10l-3-3H1zM9 5.500q2 2.500 0 5M11.500 4q3 4 0 8M14 2.500q4 5.500 0 11" stroke="#fff" {...N} /></svg>
            <span>ENG</span>
          </TrayIcons>
          <Clock>8:56 PM<br />1/12/2024</Clock>
          <Notice aria-label="Notifications"><svg width="24" height="24" viewBox="0 0 24 24"><path d="M1 2h16v13H9l-4 4v-4H1z" fill="#fff" /><path d="M4 5.500h10M4 8.500h10M4 11.500h6" stroke="#223" /><circle cx="17" cy="16" r="6.500" fill="#333f4c" stroke="#8a949c" /><text x="17" y="20" textAnchor="middle" fontFamily="Open Sans, sans-serif" fontSize="10" fill="#fff">1</text></svg></Notice>
        </Tray>
      </TaskBar>
    </Page>
  );
}
